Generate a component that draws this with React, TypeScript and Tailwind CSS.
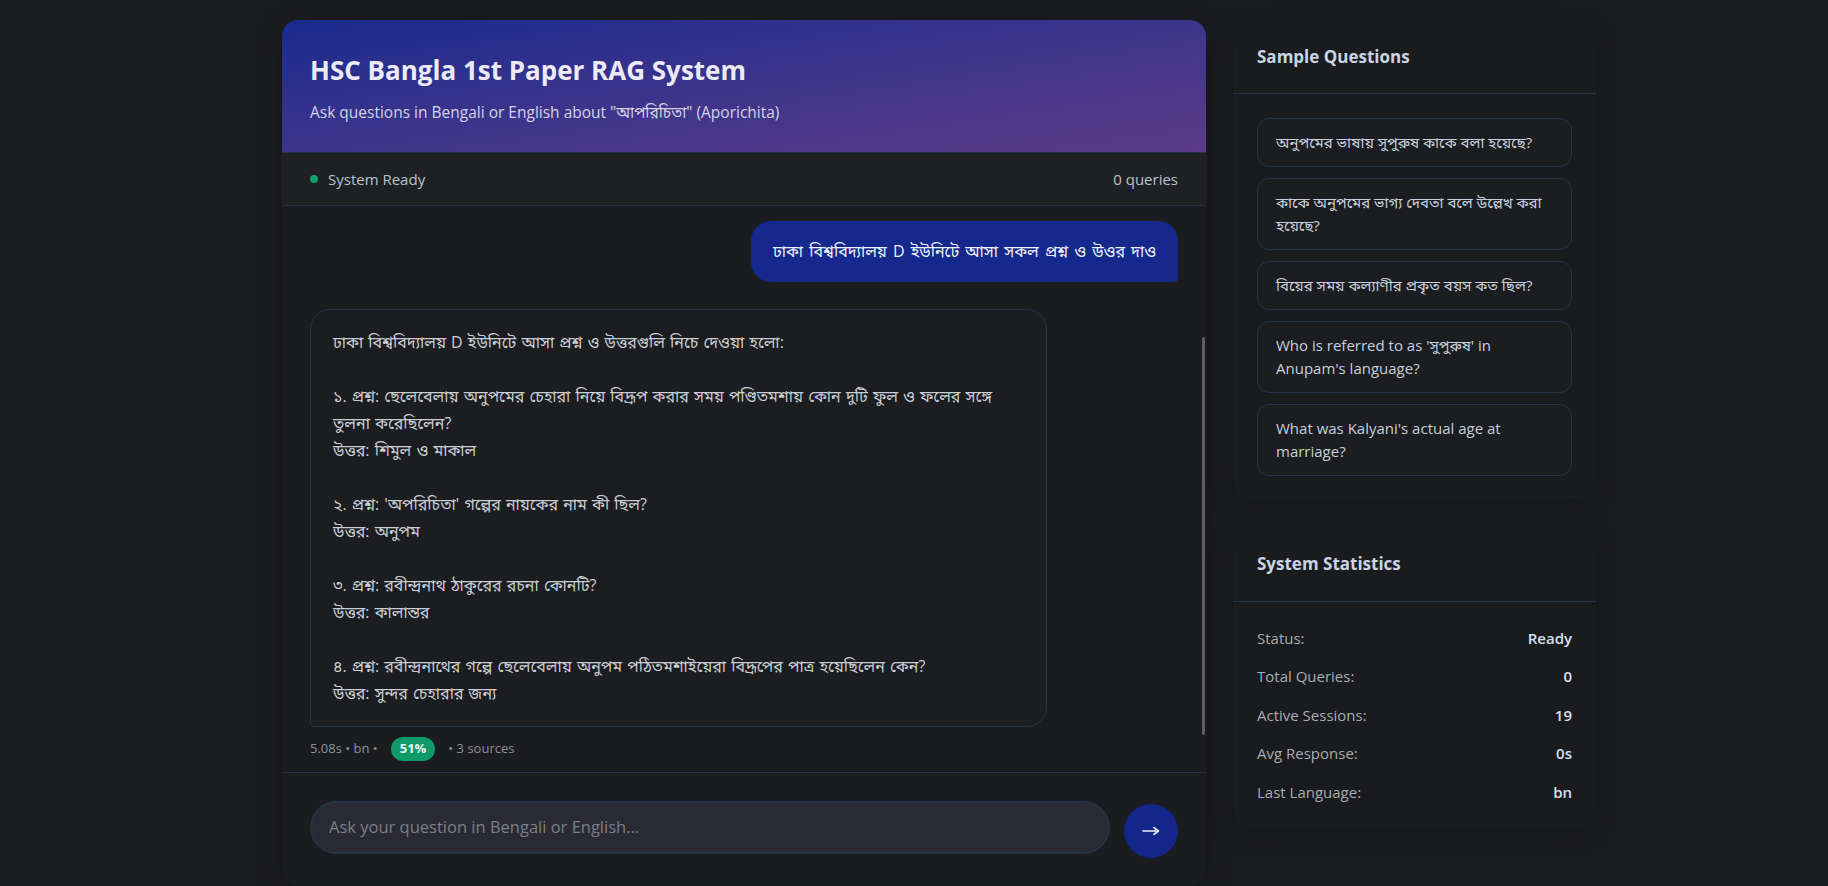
import React from "react";

const questions = [
  "অনুপমের ভাষায় সুপুরুষ কাকে বলা হয়েছে?",
  "কাকে অনুপমের ভাগ্য দেবতা বলে উল্লেখ করা হয়েছে?",
  "বিয়ের সময় কল্যাণীর প্রকৃত বয়স কত ছিল?",
  "Who is referred to as 'সুপুরুষ' in Anupam's language?",
  "What was Kalyani's actual age at marriage?",
];

const stats: [string, string][] = [
  ["Status:", "Ready"],
  ["Total Queries:", "0"],
  ["Active Sessions:", "19"],
  ["Avg Response:", "0s"],
  ["Last Language:", "bn"],
];

const answerLines = [
  "ঢাকা বিশ্ববিদ্যালয় D ইউনিটে আসা প্রশ্ন ও উত্তরগুলি নিচে দেওয়া হলো:",
  "",
  "১. প্রশ্ন: ছেলেবেলায় অনুপমের চেহারা নিয়ে বিদ্রূপ করার সময় পণ্ডিতমশায় কোন দুটি ফুল ও ফলের সঙ্গে",
  "তুলনা করেছিলেন?",
  "উত্তর: শিমুল ও মাকাল",
  "",
  "২. প্রশ্ন: 'অপরিচিতা' গল্পের নায়কের নাম কী ছিল?",
  "উত্তর: অনুপম",
  "",
  "৩. প্রশ্ন: রবীন্দ্রনাথ ঠাকুরের রচনা কোনটি?",
  "উত্তর: কালান্তর",
  "",
  "৪. প্রশ্ন: রবীন্দ্রনাথের গল্পে ছেলেবেলায় অনুপম পঠিতমশাইয়েরা বিদ্রূপের পাত্র হয়েছিলেন কেন?",
  "উত্তর: সুন্দর চেহারার জন্য",
];

export default function App() {
  return (
    <div className="min-h-screen bg-[#1c1d20] font-['Open_Sans','Noto_Sans','Noto_Sans_Bengali',sans-serif] text-[#d0d4da]">
      <div className="flex gap-[27px] pl-[282px] pt-5">
        {/* Main chat card */}
        <main className="flex h-[866px] w-[924px] flex-col overflow-hidden rounded-2xl bg-[#1b1c1f] shadow-[0_8px_30px_rgba(0,0,0,0.35)]">
          <header className="h-[132px] shrink-0 bg-gradient-to-br from-[#182a8e] to-[#5c3b88] px-7 pt-[34px]">
            <h1 className="text-[26px] leading-8 font-bold text-[#eceaf4]">
              HSC Bangla 1st Paper RAG System
            </h1>
            <p className="mt-[14px] text-[15.5px] leading-6 text-[#d4d2e6]">
              Ask questions in Bengali or English about "আপরিচিতা" (Aporichita)
            </p>
          </header>

          <div className="flex h-[54px] shrink-0 items-center justify-between border-y border-[#26324a] bg-[#1f2023] px-7 text-[15px] text-[#b8c2ce]">
            <div className="flex items-center gap-[10px]">
              <span className="h-2 w-2 rounded-full bg-[#12a06e]" />
              <span>System Ready</span>
            </div>
            <span>0 queries</span>
          </div>

          <div className="relative flex-1 overflow-hidden px-7 pt-[15px]">
            <div className="flex justify-end">
              <div className="rounded-[20px] rounded-br-[4px] bg-[#15288c] px-[22px] py-[17px] text-base leading-[1.7] text-[#eef0f8] [word-spacing:2px]">
                ঢাকা বিশ্ববিদ্যালয় D ইউনিটে আসা সকল প্রশ্ন ও উওর দাও
              </div>
            </div>

            <div className="mt-[27px] w-[737px] rounded-[20px] rounded-bl-[4px] border border-[#27334a] bg-[#1c1d20] px-[22px] py-[19px] text-base leading-[27px] text-[#c9cdd3] [word-spacing:1px]">
              {answerLines.map((l, i) => (
                <div key={i} className="h-[27px] whitespace-nowrap">
                  {l}
                </div>
              ))}
            </div>

            <div className="mt-[10px] flex items-center text-[13px] text-[#8c9099]">
              <span>5.08s • bn •</span>
              <span className="mx-[13px] flex h-6 items-center rounded-full bg-[#0f9a6a] px-[9px] text-[13px] font-bold text-[#e8f7f0]">
                51%
              </span>
              <span>• 3 sources</span>
            </div>

            <div className="absolute right-[1px] top-[131px] h-[398px] w-[3px] rounded-full bg-[#5b5d62]" />
          </div>

          <div className="flex h-[114px] shrink-0 items-start gap-[14px] border-t border-[#26324a] px-7 pt-[28px]">
            <div className="flex h-[53px] flex-1 items-center rounded-full border-2 border-[#263246] bg-[#2a2a34] px-[17px] text-[16.5px] text-[#7b7f88]">
              Ask your question in Bengali or English...
            </div>
            <button className="mt-[3px] flex h-[54px] w-[54px] items-center justify-center rounded-full bg-[#13278a] text-white">
              <svg width="18" height="10" viewBox="0 0 18 10" fill="none">
                <path d="M1 5h15" stroke="#f2f4fa" strokeWidth="1.6" strokeLinecap="round" />
                <path d="M12 1.6L16.4 5L12 8.4" stroke="#f2f4fa" strokeWidth="1.6" strokeLinecap="round" strokeLinejoin="round" />
              </svg>
            </button>
          </div>
        </main>

        {/* Sidebar */}
        <aside className="flex w-[363px] flex-col gap-[28px]">
          <section className="rounded-2xl bg-[#1a1b1e] shadow-[0_6px_24px_rgba(0,0,0,0.25)]">
            <div className="flex h-[74px] items-center border-b border-[#26324a] px-6">
              <h2 className="text-[17px] font-bold text-[#c9d4e3]">Sample Questions</h2>
            </div>
            <div className="flex flex-col gap-[11px] px-6 pt-6 pb-[23px]">
              {questions.map((q) => (
                <button
                  key={q}
                  className="rounded-xl border border-[#25324a] bg-[#1c1d20] px-[18px] py-3 text-left text-[15px] leading-[23px] text-[#c6cfdb]"
                >
                  {q}
                </button>
              ))}
            </div>
          </section>

          <section className="rounded-2xl bg-[#1a1b1e] shadow-[0_6px_24px_rgba(0,0,0,0.25)]">
            <div className="flex h-[75px] items-center border-b border-[#26324a] px-6">
              <h2 className="text-[17px] font-bold text-[#c9d4e3]">System Statistics</h2>
            </div>
            <div className="flex flex-col gap-[14.5px] px-6 py-6">
              {stats.map(([k, v]) => (
                <div key={k} className="flex h-6 items-center justify-between text-[15px]">
                  <span className="text-[#a7abb2]">{k}</span>
                  <span className="font-semibold text-[#d3e0f0]">{v}</span>
                </div>
              ))}
            </div>
          </section>
        </aside>
      </div>
    </div>
  );
}
